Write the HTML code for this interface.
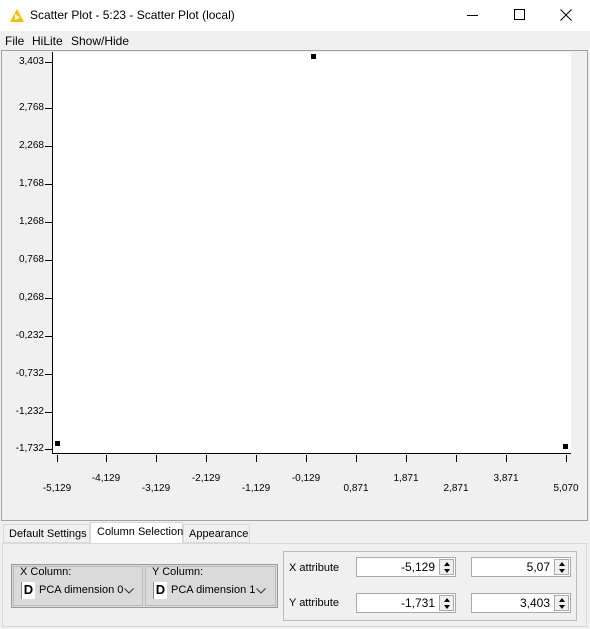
<!DOCTYPE html><html><head><style>
*{box-sizing:border-box}
body{margin:0;width:590px;height:629px;background:#f0f0f0;font-family:"Liberation Sans",sans-serif;font-size:12px;color:#000;position:relative;overflow:hidden}
.a{position:absolute;white-space:nowrap}
.t{font-size:10px;white-space:nowrap}
.inp{position:absolute;background:#fff;border:1px solid #a9a9a9;height:20px;font-size:12px;text-align:right;padding:2px 20px 0 0}
.sp{position:absolute;right:1px;top:1px;width:15px;height:16px;border:1px solid #aaa;background:#f0f0f0}
.sp:before{content:"";position:absolute;left:4px;top:2px;border-left:3px solid transparent;border-right:3px solid transparent;border-bottom:4px solid #000}
.sp:after{content:"";position:absolute;left:4px;top:9px;border-left:3px solid transparent;border-right:3px solid transparent;border-top:4px solid #000}
</style></head><body>
<div class="a" style="left:0;top:0;width:590px;height:31px;background:#fff"></div>
<svg class="a" style="left:9px;top:8px" width="16" height="15"><polygon points="8,1 15,14 1,14" fill="#f6c000"/><polygon points="6,6 11,9.5 6,12" fill="#fff"/></svg>
<div class="a" style="left:30px;top:8px;font-size:12px">Scatter Plot - 5:23 - Scatter Plot (local)</div>
<div class="a" style="left:467px;top:15px;width:11px;height:1px;background:#000"></div>
<div class="a" style="left:514px;top:9px;width:11px;height:11px;border:1px solid #000"></div>
<svg class="a" style="left:560px;top:9px" width="12" height="12"><path d="M0.5 0.5L11.5 11.5M11.5 0.5L0.5 11.5" stroke="#000" stroke-width="1"/></svg>
<div class="a" style="left:5px;top:34px">File</div>
<div class="a" style="left:32px;top:34px">HiLite</div>
<div class="a" style="left:71px;top:34px">Show/Hide</div>
<div class="a" style="left:1px;top:50px;width:587px;height:471px;border:1px solid #a0a0a0"></div>
<div class="a" style="left:52px;top:52px;width:519px;height:402px;background:#fff;border-left:1px solid #000;border-bottom:1px solid #000"></div>
<div class="a" style="left:311px;top:54px;width:5px;height:5px;background:#000"></div>
<div class="a" style="left:55px;top:441px;width:5px;height:5px;background:#000"></div>
<div class="a" style="left:563px;top:444px;width:5px;height:5px;background:#000"></div>
<div id="y"></div><div id="x"></div>
<script>
var ys=[["3,403",62],["2,768",108],["2,268",146],["1,768",184],["1,268",222],["0,768",260],["0,268",298],["-0,232",336],["-0,732",374],["-1,232",412],["-1,732",449]],h="";
ys.forEach(function(v){h+='<div class="a t" style="right:546px;top:'+(v[1]-6)+'px">'+v[0]+'</div><div class="a" style="left:45px;top:'+v[1]+'px;width:7px;height:1px;background:#000"></div>';});
document.getElementById("y").innerHTML=h;
var xs=["-5,129","-4,129","-3,129","-2,129","-1,129","-0,129","0,871","1,871","2,871","3,871","5,070"],px=[57,106,156,206,256,306,356,406,456,506,566];h="";
xs.forEach(function(v,i){h+='<div class="a" style="left:'+px[i]+'px;top:455px;width:1px;height:7px;background:#000"></div><div class="a t" style="left:'+(px[i]-50)+'px;width:100px;text-align:center;top:'+(i%2?473:483)+'px">'+v+'</div>';});
document.getElementById("x").innerHTML=h;
</script>
<div class="a" style="left:3px;top:524px;width:87px;height:19px;border:1px solid #d9d9d9;padding:3px 0 0 5px;font-size:11px">Default Settings</div>
<div class="a" style="left:90px;top:522px;width:93px;height:22px;border:1px solid #d9d9d9;border-bottom:none;background:#fff;padding:3px 0 0 6px;font-size:11px">Column Selection</div>
<div class="a" style="left:183px;top:524px;width:67px;height:19px;border:1px solid #d9d9d9;padding:3px 0 0 5px;font-size:11px">Appearance</div>
<div class="a" style="left:2px;top:543px;width:585px;height:84px;border:1px solid #d9d9d9;background:#f0f0f0"></div>
<div class="a" style="left:11px;top:564px;width:267px;height:44px;border:1px solid #999;background:#dadada"></div>
<div class="a" style="left:13px;top:566px;width:130px;height:40px;border:1px solid #bbb"></div>
<div class="a" style="left:145px;top:566px;width:131px;height:40px;border:1px solid #bbb"></div>
<div class="a" style="left:20px;top:566px;font-size:11px">X Column:</div>
<div class="a" style="left:152px;top:566px;font-size:11px">Y Column:</div>
<div class="a" style="left:21px;top:582px;width:14px;height:17px;background:#fff;border-left:1px solid #888;font-weight:bold;font-size:13px;text-align:center">D</div>
<div class="a" style="left:39px;top:584px;font-size:11px">PCA dimension 0</div>
<svg class="a" style="left:124px;top:588px" width="10" height="6"><path d="M0.5 0.5L5 5L9.5 0.5" stroke="#333" fill="none"/></svg>
<div class="a" style="left:153px;top:582px;width:14px;height:17px;background:#fff;border-left:1px solid #888;font-weight:bold;font-size:13px;text-align:center">D</div>
<div class="a" style="left:171px;top:584px;font-size:11px">PCA dimension 1</div>
<svg class="a" style="left:256px;top:588px" width="10" height="6"><path d="M0.5 0.5L5 5L9.5 0.5" stroke="#333" fill="none"/></svg>
<div class="a" style="left:283px;top:551px;width:294px;height:70px;border:1px solid #bbb"></div>
<div class="a" style="left:289px;top:562px;font-size:11px">X attribute</div>
<div class="a" style="left:289px;top:597px;font-size:11px">Y attribute</div>
<div class="inp" style="left:356px;top:557px;width:100px">-5,129<div class="sp"></div></div>
<div class="inp" style="left:471px;top:557px;width:100px">5,07<div class="sp"></div></div>
<div class="inp" style="left:356px;top:593px;width:100px">-1,731<div class="sp"></div></div>
<div class="inp" style="left:471px;top:593px;width:100px">3,403<div class="sp"></div></div>
</body></html>
